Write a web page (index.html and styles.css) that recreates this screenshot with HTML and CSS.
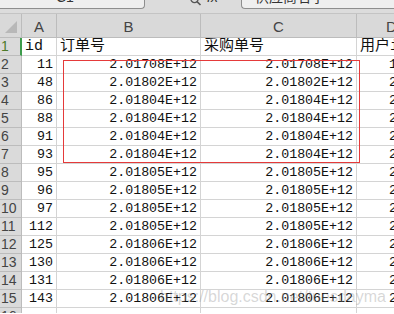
FILE: index.html
```html
<!DOCTYPE html>
<html lang="zh-CN">
  <head>
    <meta charset="UTF-8" />
    <meta name="viewport" content="width=device-width, initial-scale=1.0" />
    <title>订单表</title>
    <link rel="stylesheet" href="styles.css">
  </head>
  <body>
    <div class="topbar">
      <div class="namebox"><span class="cut">C1</span></div>
      <div class="tools">
        <svg class="search" width="12" height="6" viewBox="0 0 12 6">
          <circle cx="4.5" cy="-1" r="3.6" fill="none" stroke="#555" stroke-width="1.3" />
          <path d="M7 1.6 L10.5 5" stroke="#555" stroke-width="1.6" />
        </svg>
        <span class="cut fx">fx</span>
      </div>
      <div class="formula"><span class="cut">供应商名字</span></div>
    </div>
    <div class="sheet">
      <div class="grid">
        <!-- 列头 -->
      </div>
      <div class="mark"></div>
      <div class="watermark">https://blog.csdn.net/tuesdayma</div>
    </div>
    <script>
      var rows = [
        ["id", "订单号", "采购单号", "用户i"],
        ["11", "2.01708E+12", "2.01708E+12", "1"],
        ["48", "2.01802E+12", "2.01802E+12", "2"],
        ["86", "2.01804E+12", "2.01804E+12", "2"],
        ["88", "2.01804E+12", "2.01804E+12", "2"],
        ["91", "2.01804E+12", "2.01804E+12", "2"],
        ["93", "2.01804E+12", "2.01804E+12", "2"],
        ["95", "2.01805E+12", "2.01805E+12", "2"],
        ["96", "2.01805E+12", "2.01805E+12", "2"],
        ["97", "2.01805E+12", "2.01805E+12", "2"],
        ["112", "2.01805E+12", "2.01805E+12", "2"],
        ["125", "2.01806E+12", "2.01806E+12", "2"],
        ["130", "2.01806E+12", "2.01806E+12", "2"],
        ["131", "2.01806E+12", "2.01806E+12", "2"],
        ["143", "2.01806E+12", "2.01806E+12", "2"],
        ["", "", "", ""],
      ];
      var grid = document.querySelector(".grid");
      var str = `<div class="corner"><svg width="12" height="12" viewBox="0 0 12 12"><path d="M12 0 L12 12 L0 12 Z" fill="#b8b8b8"/></svg></div>
        <div class="colhead">A</div>
        <div class="colhead">B</div>
        <div class="colhead">C</div>
        <div class="colhead last">D</div>`;
      rows.forEach(function (item, i) {
        var head = i == 0 ? "rowhead active" : "rowhead";
        var cls = i == 0 ? "cell text" : "cell num";
        str += `<div class="${head}">${i + 1}</div>
          <div class="${cls}">${item[0]}</div>
          <div class="${cls}">${item[1]}</div>
          <div class="${cls}">${item[2]}</div>
          <div class="cell last ${i == 0 ? "text" : ""}">${item[3]}</div>`;
      });
      grid.innerHTML = str;
    </script>
  </body>
</html>
```

FILE: styles.css
```css
* {
  padding: 0;
  margin: 0;
  box-sizing: border-box;
}
body {
  width: 394px;
  height: 314px;
  overflow: hidden;
  background: #fff;
  font-family: "Liberation Mono", "Noto Sans CJK SC", monospace;
}
.topbar {
  height: 14px;
  display: flex;
  background: #dcdcdc;
  border-bottom: 1px solid #c4c4c4;
  overflow: hidden;
}
.namebox {
  width: 145px;
  height: 9px;
  background: #efefef;
  border: 1px solid #8e8e8e;
  border-top: none;
  border-left: none;
  border-bottom-right-radius: 4px;
  padding-left: 56px;
  overflow: hidden;
}
.cut {
  display: block;
  font-family: "Liberation Sans", "Noto Sans CJK SC", sans-serif;
  font-size: 14px;
  line-height: 14px;
  margin-top: -10px;
  color: #333;
}
.tools {
  width: 96px;
  display: flex;
  padding-left: 45px;
  height: 6px;
  overflow: hidden;
}
.search {
  display: block;
}
.fx {
  margin-left: 5px;
  font-style: italic;
}
.formula {
  flex: 1;
  height: 9px;
  background: #efefef;
  border: 1px solid #8e8e8e;
  border-top: none;
  border-right: none;
  border-bottom-left-radius: 4px;
  padding-left: 13px;
  overflow: hidden;
}
.sheet {
  position: relative;
  height: 299px;
  overflow: hidden;
}
.grid {
  display: grid;
  grid-template-columns: 22px 35px 144px 156px 37px;
  grid-auto-rows: 18px;
  grid-template-rows: 24px;
}
.corner,
.colhead,
.rowhead {
  background: #d9d9d9;
  border-right: 1px solid #bcbcbc;
  border-bottom: 1px solid #bcbcbc;
  font-family: "Liberation Sans", sans-serif;
  color: #444;
}
.corner {
  display: flex;
  align-items: flex-end;
  padding: 0 0 4px 5px;
}
.corner svg {
  display: block;
}
.colhead {
  display: flex;
  justify-content: center;
  align-items: center;
  font-size: 15px;
  padding-top: 2px;
  overflow: hidden;
}
.colhead.last {
  justify-content: flex-start;
  padding-left: 29px;
  border-right: none;
}
.rowhead {
  font-size: 14px;
  line-height: 17px;
  padding-left: 1px;
  background: #dadada;
}
.rowhead.active {
  border-right: 2px solid #3d9c4b;
  color: #4d7a28;
}
.cell {
  border-right: 1px solid #d4d4d4;
  border-bottom: 1px solid #d4d4d4;
  font-size: 13.3px;
  line-height: 17px;
  color: #111;
  white-space: nowrap;
  overflow: hidden;
}
.cell.num {
  text-align: right;
  padding-right: 3px;
}
.cell.text {
  padding-left: 3px;
  font-size: 15px;
}
.cell.last {
  border-right: none;
  padding-left: 32px;
}
.cell.last.text {
  padding-left: 3px;
}
.mark {
  position: absolute;
  left: 63px;
  top: 46px;
  width: 297px;
  height: 103px;
  border: 1px solid #e53a3a;
}
.watermark {
  position: absolute;
  left: 160px;
  top: 274px;
  font-family: "Liberation Sans", sans-serif;
  font-size: 16px;
  color: rgba(140, 140, 140, 0.35);
  white-space: nowrap;
}
```
